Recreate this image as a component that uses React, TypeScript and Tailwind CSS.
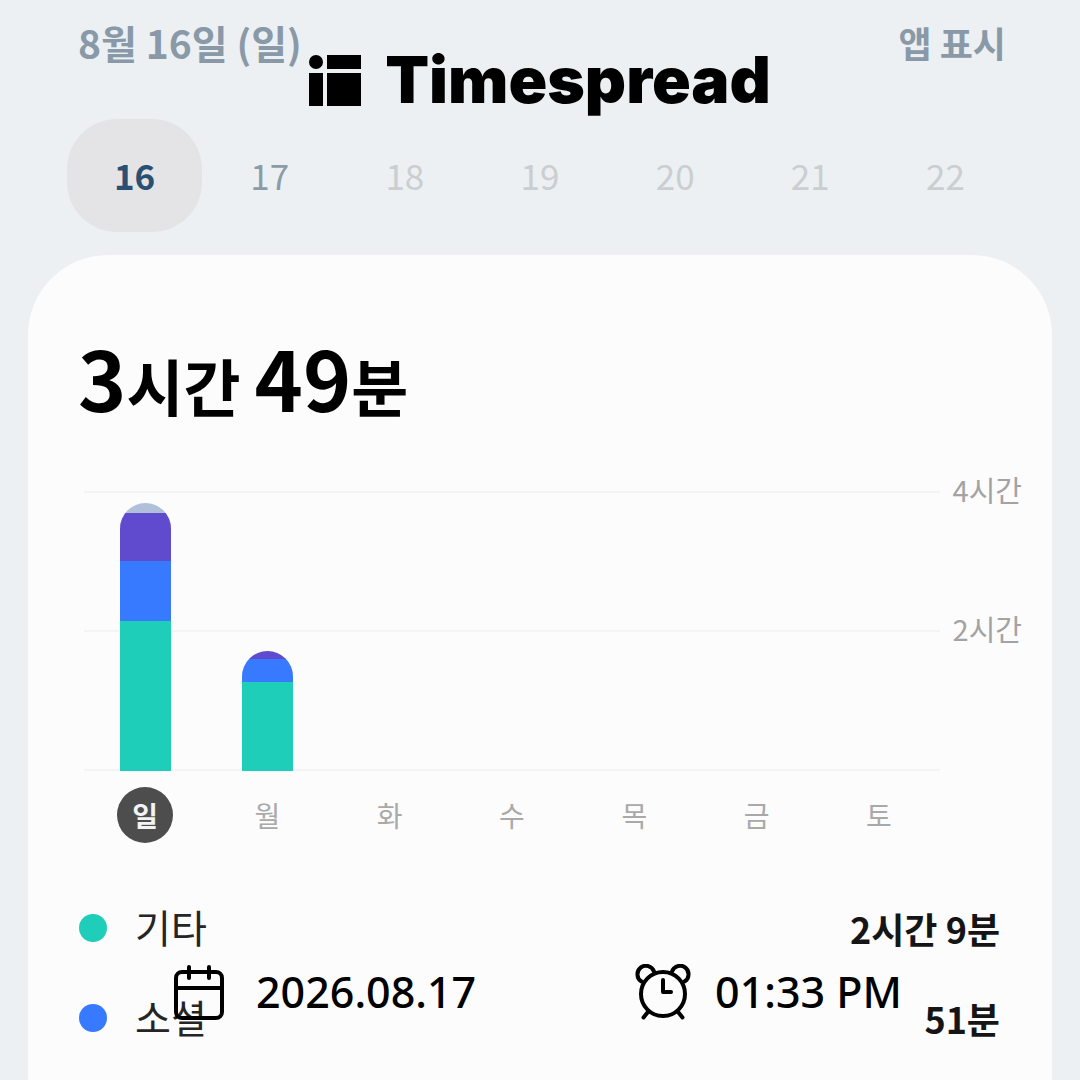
import clsx from 'clsx'

const dates = [16, 17, 18, 19, 20, 21, 22]

// minutes are stacked bottom to top: other, social, video, rest
const week = [
  { day: '일', usage: [129, 51, 41, 9] },
  { day: '월', usage: [76, 20, 7, 0] },
  { day: '화', usage: [] },
  { day: '수', usage: [] },
  { day: '목', usage: [] },
  { day: '금', usage: [] },
  { day: '토', usage: [] },
]

const segmentColors = ['bg-[#1fceb8]', 'bg-[#387aff]', 'bg-[#604bce]', 'bg-[#b0bfda]']

const categories = [
  { name: '기타', time: '2시간 9분', color: 'bg-[#1fceb8]' },
  { name: '소셜', time: '51분', color: 'bg-[#387aff]' },
]

const MAX_MINUTES = 240

function UsageChart() {
  return (
    <div className="flex">
      <div className="min-w-0 flex-1">
        <div className="relative h-[280px]">
          <div className="absolute inset-0 flex flex-col justify-between">
            <div className="h-[2px] bg-[#f3f4f4]" />
            <div className="h-[2px] bg-[#f3f4f4]" />
            <div className="h-[2px] bg-[#f3f4f4]" />
          </div>
          <div className="relative grid h-full grid-cols-7">
            {week.map(({ day, usage }) => (
              <div key={day} className="flex h-full items-end justify-center">
                <div className="flex h-full w-[51px] flex-col justify-end">
                  <BarSegments usage={usage} />
                </div>
              </div>
            ))}
          </div>
        </div>
        <div className="mt-4 grid grid-cols-7">
          {week.map(({ day }, i) => (
            <div key={day} className="flex justify-center">
              <span
                className={clsx(
                  'flex size-14 items-center justify-center rounded-full text-[28px] leading-none',
                  i === 0 ? 'bg-[#4d4d4d] font-bold text-[#f2f2f2]' : 'text-[#a9a9a9]'
                )}
              >
                {day}
              </span>
            </div>
          ))}
        </div>
      </div>
      <div className="-mt-[22px] flex w-[82px] flex-col justify-start text-right text-[29px] leading-[40px] text-[#a3a3a3]">
        <span className="h-[139px]">4시간</span>
        <span>2시간</span>
      </div>
    </div>
  )
}

function BarSegments({ usage }: { usage: number[] }) {
  const total = usage.reduce((sum, m) => sum + m, 0)
  if (!total) return null

  return (
    <div
      className="flex flex-col-reverse overflow-hidden rounded-t-full"
      style={{ height: `${(total / MAX_MINUTES) * 100}%` }}
    >
      {usage.map((minutes, i) => (
        <div
          key={i}
          className={segmentColors[i]}
          style={{ height: `${(minutes / total) * 100}%` }}
        />
      ))}
    </div>
  )
}

function Logo() {
  return (
    <div className="flex items-center gap-6 text-black">
      <svg className="h-[52px] w-[52px]" viewBox="0 0 52 52" fill="currentColor" aria-hidden="true">
        <circle cx="7" cy="8" r="7" />
        <rect x="0" y="19" width="14" height="33" />
        <rect x="18" y="1" width="34" height="14" />
        <rect x="18" y="19" width="34" height="33" />
      </svg>
      <span className="font-['Inter',sans-serif] text-[64px] leading-[60px] font-black">
        Timespread
      </span>
    </div>
  )
}

function CalendarIcon() {
  return (
    <svg
      className="h-[56px] w-[50px]"
      viewBox="0 0 50 56"
      fill="none"
      stroke="currentColor"
      strokeWidth="4"
      strokeLinecap="round"
      aria-hidden="true"
    >
      <rect x="2" y="8" width="46" height="46" rx="6" />
      <path d="M2 24h46M15 3v11M35 3v11" />
    </svg>
  )
}

function AlarmIcon() {
  return (
    <svg
      className="h-[56px] w-[56px]"
      viewBox="0 0 56 56"
      fill="none"
      stroke="currentColor"
      strokeWidth="4"
      strokeLinecap="round"
      strokeLinejoin="round"
      aria-hidden="true"
    >
      <circle cx="28" cy="30" r="22" />
      <path d="M28 16v12h8" />
      <path d="M12.500 48.500L8.500 53.500M43.500 48.500l4 5" />
      <path d="M6.500 17.500a8.500 8.500 0 1 1 12.500-10M37 7.500a8.500 8.500 0 1 1 12.500 10" />
    </svg>
  )
}

export default function App() {
  return (
    <div className="relative flex min-h-screen flex-col overflow-hidden bg-[#ecf0f3] font-['Noto_Sans_CJK_KR',sans-serif]">
      <header className="flex items-center justify-between pt-[17px] pr-[74px] pl-[78px] leading-[50px] font-bold text-[#8999a7]">
        <h1 className="text-[39px]">8월 16일 (일)</h1>
        <button type="button" className="text-[36px]">
          앱 표시
        </button>
      </header>

      <nav className="mt-[52px] grid grid-cols-7 px-[67px]">
        {dates.map((date, i) => (
          <button
            key={date}
            type="button"
            className={clsx(
              'h-[113px] rounded-[50px] text-[35px]',
              i === 0 && 'bg-[#e4e4e6] font-bold text-[#2b4f73]',
              i === 1 && 'text-[#8c9ba8]',
              i > 1 && 'text-[#cbced1]'
            )}
          >
            {date}
          </button>
        ))}
      </nav>

      <main className="mx-7 mt-[23px] flex-1 rounded-t-[80px] bg-[#fcfcfc]">
        <h2 className="pt-[68px] pl-[50px] text-[62px] leading-[108px] font-bold text-black">
          <span className="text-[82px]">3</span>시간 <span className="text-[82px]">49</span>분
        </h2>

        <div className="mt-[52px] pr-[30px] pl-14">
          <UsageChart />
        </div>

        <ul className="mt-10 pr-[52px] pl-[51px]">
          {categories.map(({ name, time, color }) => (
            <li key={name} className="flex h-[90px] items-center leading-[52px]">
              <span className={clsx('size-7 rounded-full', color)} />
              <span className="ml-7 pb-1 text-[39px] text-[#252525]">{name}</span>
              <span className="ml-auto text-[36px] font-bold text-[#151515]">{time}</span>
            </li>
          ))}
        </ul>
      </main>

      {/* brand and timestamp sit over the usage screen */}
      <div className="absolute inset-x-0 top-[50px] flex justify-center">
        <Logo />
      </div>
      <div className="absolute inset-x-0 bottom-[58px] flex justify-between pr-[178px] pl-[174px] font-['Noto_Sans',sans-serif] text-[43px] leading-[60px] font-medium text-black">
        <div className="flex items-center gap-8">
          <CalendarIcon />
          <time>2026.08.17</time>
        </div>
        <div className="flex items-center gap-6">
          <AlarmIcon />
          <time>01:33 PM</time>
        </div>
      </div>
    </div>
  )
}
